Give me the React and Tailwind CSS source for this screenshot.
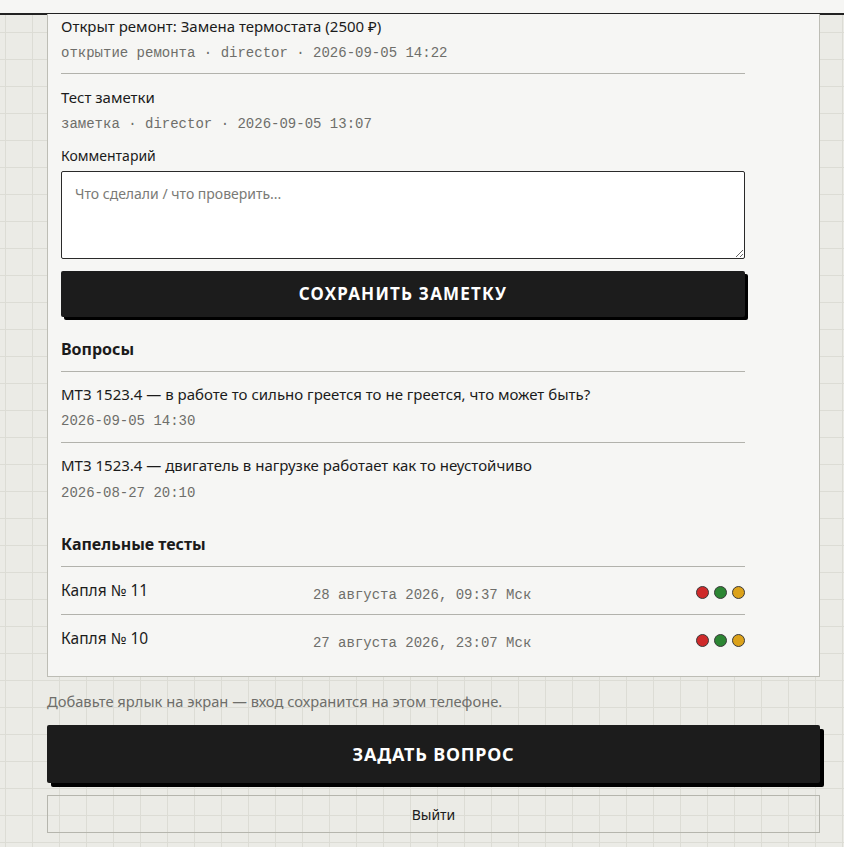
// App.jsx — карточка трактора: журнал, вопросы, капельные тесты
const sans = { fontFamily: '"Noto Sans", "Liberation Sans", sans-serif' };

const journal = [
  {
    title: "Открыт ремонт: Замена термостата (2500 ₽)",
    meta: "открытие ремонта · director · 2026-09-05 14:22",
  },
  {
    title: "Тест заметки",
    meta: "заметка · director · 2026-09-05 13:07",
  },
];

const questions = [
  {
    text: "МТЗ 1523.4 — в работе то сильно греется то не греется, что может быть?",
    date: "2026-09-05 14:30",
  },
  {
    text: "МТЗ 1523.4 — двигатель в нагрузке работает как то неустойчиво",
    date: "2026-08-27 20:10",
  },
];

const drops = [
  { name: "Капля № 11", date: "28 августа 2026, 09:37 Мск" },
  { name: "Капля № 10", date: "27 августа 2026, 23:07 Мск" },
];

function Meta({ children }) {
  return (
    <div className="font-['Liberation_Mono',monospace] text-[14px] leading-5 text-[#6e6e6a]">
      {children}
    </div>
  );
}

function Dots() {
  return (
    <div className="flex translate-y-[2px] gap-[5px]">
      <span className="block h-[13px] w-[13px] rounded-full border border-[#3a3a3a] bg-[#cf2a2a]" />
      <span className="block h-[13px] w-[13px] rounded-full border border-[#3a3a3a] bg-[#2c8633]" />
      <span className="block h-[13px] w-[13px] rounded-full border border-[#3a3a3a] bg-[#dca21a]" />
    </div>
  );
}

export default function App() {
  return (
    <div
      style={sans}
      className="min-h-[847px] bg-[#ebebe6] bg-[linear-gradient(#dcdcd5_1px,transparent_1px),linear-gradient(90deg,#dcdcd5_1px,transparent_1px)] bg-[size:27px_27px] bg-[position:5px_5px] text-[#1b1b1b]"
    >
      <header className="h-[15px] border-b-2 border-[#222] bg-[#f6f6f4]" />

      <main className="ml-[47px] w-[773px]">
        <section className="border border-t-0 border-[#bdbdb5] bg-[#f6f6f4] pl-[13px] pr-[74px] pb-[14px]">
          {journal.map((j, i) => (
            <div
              key={i}
              className={
                i === 0
                  ? "-mt-[1px] border-b border-[#b2b2ac] pb-[10px]"
                  : "pt-[11px] pb-[10px]"
              }
            >
              <div className="text-[15px] leading-6">{j.title}</div>
              <div className="mt-[5px]">
                <Meta>{j.meta}</Meta>
              </div>
            </div>
          ))}

          <label className="block text-[14px] leading-6">Комментарий</label>
          <textarea
            rows={4}
            placeholder="Что сделали / что проверить..."
            className="mt-[3px] block h-[88px] w-full rounded-[2px] border border-[#2a2a2a] bg-white px-[13px] py-[12px] text-[14px] leading-5 placeholder:text-[#7a7a76]"
          />
          <button className="mt-[12px] h-[46px] w-full rounded-[2px] bg-[#1c1c1c] text-[17px] font-bold tracking-[1.2px] text-white shadow-[3px_3px_0_#000]">
            СОХРАНИТЬ ЗАМЕТКУ
          </button>

          <h3 className="mt-[20px] text-[16px] font-bold leading-6">Вопросы</h3>
          <div className="mt-[10px] border-t border-[#b2b2ac]">
            {questions.map((q, i) => (
              <div
                key={i}
                className={
                  i === 0
                    ? "border-b border-[#b2b2ac] pt-[10px] pb-[11px]"
                    : "pt-[10px] pb-[10px]"
                }
              >
                <div className="text-[15px] leading-6">{q.text}</div>
                <div className={i === 0 ? "mt-[5px]" : "mt-[6px]"}>
                  <Meta>{q.date}</Meta>
                </div>
              </div>
            ))}
          </div>

          <h3 className="mt-[19px] text-[16px] font-bold leading-6">Капельные тесты</h3>
          <div className="mt-[10px] border-t border-[#b2b2ac]">
            {drops.map((d, i) => (
              <div
                key={i}
                className={
                  "flex items-center justify-between pt-[11px] pb-[12px] " +
                  (i === 0 ? "border-b border-[#b2b2ac]" : "")
                }
              >
                <div className="text-[15.5px] leading-6">{d.name}</div>
                <div className="translate-y-[5px]">
                  <Meta>{d.date}</Meta>
                </div>
                <Dots />
              </div>
            ))}
          </div>
        </section>

        <p className="mt-[14px] text-[14.7px] leading-5 text-[#6e6e6a]">
          Добавьте ярлык на экран — вход сохранится на этом телефоне.
        </p>

        <button className="mt-[14px] h-[58px] w-full rounded-[2px] bg-[#1c1c1c] text-[18px] font-bold tracking-[0.8px] text-white shadow-[4px_4px_0_#000]">
          ЗАДАТЬ ВОПРОС
        </button>

        <button className="mt-[12px] h-[38px] w-full border border-[#b5b5ad] text-[14px] text-[#1b1b1b]">
          Выйти
        </button>
      </main>
    </div>
  );
}
